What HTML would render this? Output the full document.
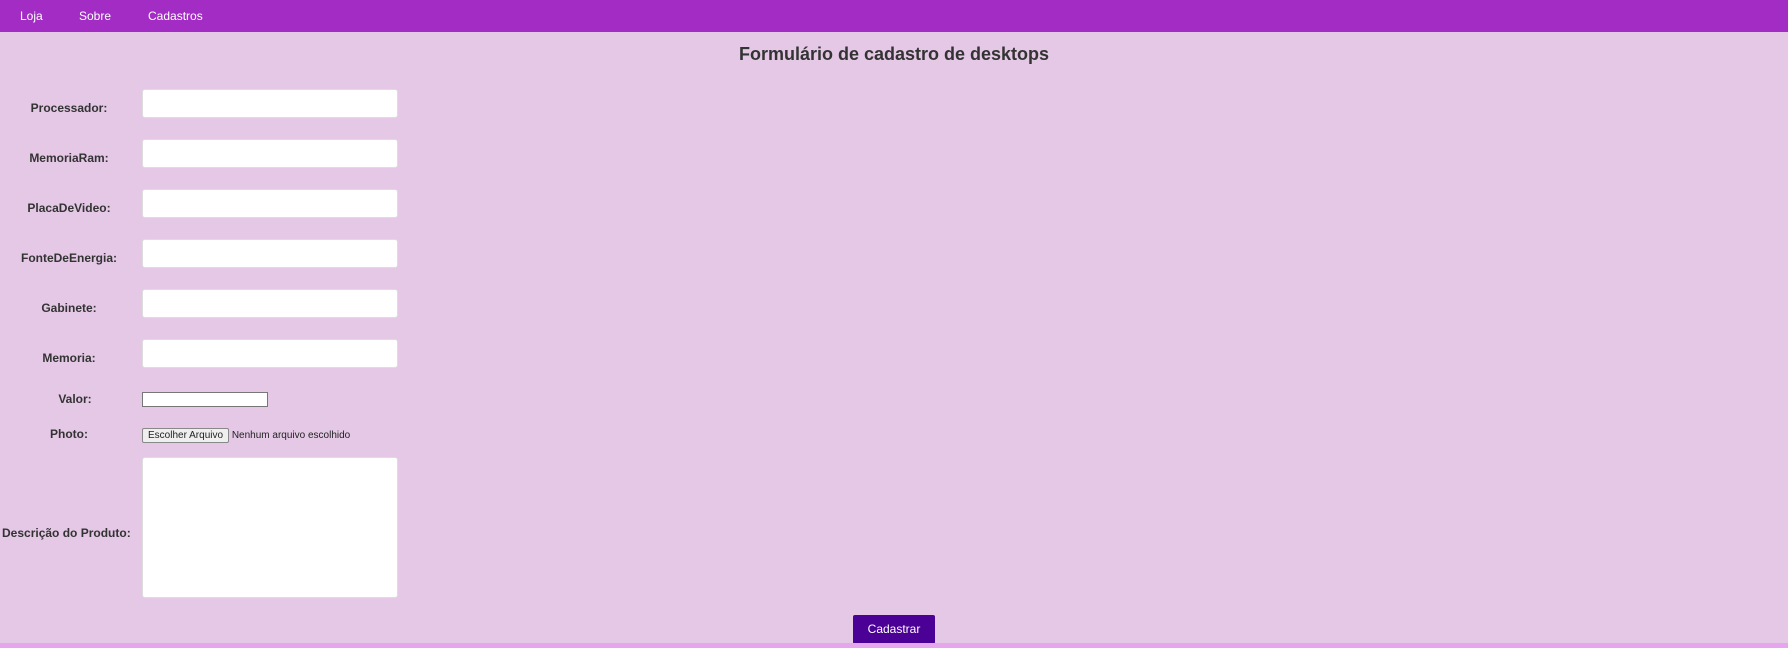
<!DOCTYPE html>
<html><head><meta charset="utf-8"><style>
body{margin:0;width:1788px;height:648px;background:#e4c8e6;font-family:"Liberation Sans",Arial,sans-serif;position:relative;overflow:hidden}
.nav{position:absolute;left:0;top:0;width:1788px;height:32px;background:#a32cc4}
.nav span{position:absolute;top:9px;color:#fff;font-size:12px}
h1{position:absolute;top:44px;left:0;width:1788px;text-align:center;margin:0;font-size:18px;font-weight:bold;color:#333}
.l{position:absolute;width:150px;left:-6px;text-align:center;font-size:12px;font-weight:bold;color:#333}
.i{position:absolute;left:142px;width:256px;height:29px;background:#fff;border:1px solid #ddd;border-radius:3px;box-sizing:border-box}
.bot{position:absolute;left:0;top:643px;width:1788px;height:5px;background:#e6a6ee}
.btn{position:absolute;left:853px;top:615px;width:82px;height:29px;background:#4b0096;color:#fff;border-radius:2px;font-size:12px;text-align:center;line-height:29px}
</style></head><body>
<div class="nav"><span style="left:20px">Loja</span><span style="left:79px">Sobre</span><span style="left:148px">Cadastros</span></div>
<h1>Formulário de cadastro de desktops</h1>
<div class="l" style="top:101px">Processador:</div><div class="i" style="top:89px"></div>
<div class="l" style="top:151px">MemoriaRam:</div><div class="i" style="top:139px"></div>
<div class="l" style="top:201px">PlacaDeVideo:</div><div class="i" style="top:189px"></div>
<div class="l" style="top:251px">FonteDeEnergia:</div><div class="i" style="top:239px"></div>
<div class="l" style="top:301px">Gabinete:</div><div class="i" style="top:289px"></div>
<div class="l" style="top:351px">Memoria:</div><div class="i" style="top:339px"></div>
<div class="l" style="top:392px;left:0">Valor:</div>
<div style="position:absolute;left:142px;top:392px;width:126px;height:15px;background:#fff;border:1px solid #777;box-sizing:border-box"></div>
<div class="l" style="top:427px">Photo:</div>
<div style="position:absolute;left:142px;top:428px;font-size:10px;color:#222;white-space:nowrap"><span style="display:inline-block;border:1px solid #888;background:#efefef;padding:1px 5px;border-radius:2px">Escolher Arquivo</span> Nenhum arquivo escolhido</div>
<div class="l" style="top:526px;left:2px;width:auto;text-align:left">Descrição do Produto:</div>
<div class="i" style="top:457px;height:141px"></div>
<div class="btn">Cadastrar</div>
<div class="bot"></div>
</body></html>
